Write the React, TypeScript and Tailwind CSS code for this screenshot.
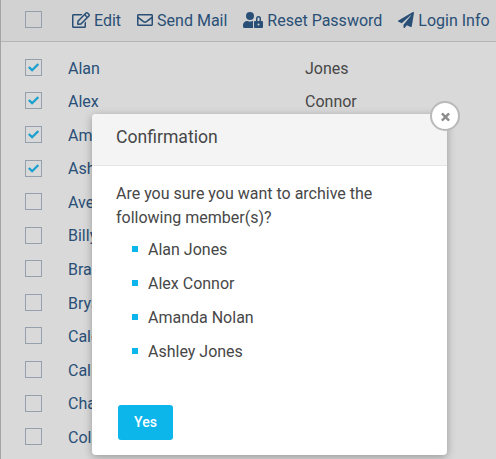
import React from "react";
import { FaRegEdit, FaRegEnvelope, FaUserLock, FaPaperPlane } from "react-icons/fa";

const members = [
  { first: "Alan", last: "Jones", checked: true },
  { first: "Alex", last: "Connor", checked: true },
  { first: "Amanda", last: "Nolan", checked: true },
  { first: "Ashley", last: "Jones", checked: true },
  { first: "Avery", last: "", checked: false },
  { first: "Billy", last: "", checked: false },
  { first: "Brandon", last: "", checked: false },
  { first: "Bryan", last: "", checked: false },
  { first: "Caleb", last: "", checked: false },
  { first: "Callie", last: "", checked: false },
  { first: "Charles", last: "", checked: false },
  { first: "Colin", last: "", checked: false },
];

function Checkbox({ checked = false }: { checked?: boolean }) {
  return (
    <span className="flex size-[17px] shrink-0 items-center justify-center border border-[#94a0ab]">
      {checked && (
        <svg viewBox="0 0 11 9" className="h-[9px] w-[11px] shrink-0" fill="none" stroke="#1ba1cf" strokeWidth="2.3">
          <path d="M0.8 4 L4.1 7.2 L10.3 1.1" />
        </svg>
      )}
    </span>
  );
}

function Action({ icon, label }: { icon: React.ReactNode; label: string }) {
  return (
    <button className="flex items-center gap-1 whitespace-nowrap">
      {icon}
      <span className="pt-px">{label}</span>
    </button>
  );
}

export default function App() {
  return (
    <div className="relative h-[459px] w-[496px] overflow-hidden border-l border-[#a5a5a5] bg-[#d9d9d9] font-[Roboto,sans-serif] text-base leading-6 text-[#474747]">
      <header className="flex h-[42px] items-center border-b border-[#b5b5b5] bg-[#d2d2d2] pb-0.5 pl-6 text-[#294f77]">
        <Checkbox />
        <div className="ml-[30px] flex gap-4 pt-px">
          <Action icon={<FaRegEdit className="h-4 w-[18px]" />} label="Edit" />
          <Action icon={<FaRegEnvelope className="size-4" />} label="Send Mail" />
          <Action icon={<FaUserLock className="h-4 w-5" />} label="Reset Password" />
          <Action icon={<FaPaperPlane className="size-4" />} label="Login Info" />
        </div>
      </header>

      <ul className="pt-[8.5px]">
        {members.map((m) => (
          <li key={m.first} className="flex h-[33.59px] items-center pl-6">
            <Checkbox checked={m.checked} />
            <span className="ml-[26px] w-[237px] pt-[2.6px] text-[#294f77]">{m.first}</span>
            <span className="pt-[2.6px]">{m.last}</span>
          </li>
        ))}
      </ul>

      <section
        role="dialog"
        className="absolute top-[114px] left-[91px] flex h-[341px] w-[355px] flex-col rounded-[4px] bg-white shadow-[0_2px_8px_rgba(0,0,0,0.3)]"
      >
        <h2 className="flex h-[52px] items-center rounded-t-[4px] border-b border-[#e5e5e5] bg-[#f4f4f4] pb-[5px] pl-6 text-[17.6px]">
          Confirmation
        </h2>
        <button
          aria-label="Close"
          className="absolute -top-[13px] -right-[13px] flex size-[30px] items-center justify-center rounded-full border-2 border-[#b9b9b9] bg-white"
        >
          <svg viewBox="0 0 10 10" className="size-[9px] translate-y-[0.5px]" stroke="#8c8c8c" strokeWidth="2.7">
            <path d="M1 1 L9 9 M9 1 L1 9" />
          </svg>
        </button>
        <p className="px-6 pt-4">Are you sure you want to archive the following member(s)?</p>
        <ul className="flex flex-col gap-[10px] pt-2 pl-10">
          {members
            .filter((m) => m.checked)
            .map((m) => (
              <li key={m.first} className="flex items-center gap-[10px]">
                <span className="mb-0.5 size-1.5 bg-[#0cb5ec]" />
                {m.first} {m.last}
              </li>
            ))}
        </ul>
        <button className="mt-auto mb-[15px] ml-[26px] h-[35px] w-[55px] rounded-[3px] bg-[#0cb5ea] pb-px text-sm font-medium text-white">
          Yes
        </button>
      </section>
    </div>
  );
}
